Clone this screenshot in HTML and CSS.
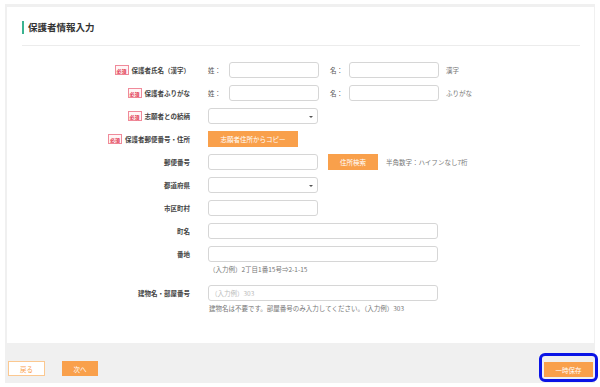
FILE: index.html
```html
<!DOCTYPE html>
<html lang="ja">
<head>
<meta charset="utf-8">
<title>保護者情報入力</title>
<link rel="stylesheet" href="styles.css">
</head>
<body>
<div class="frame">
  <div class="panel">
    <div class="header"><h1 class="title">保護者情報入力</h1></div>
    <div class="form">
      <div class="row">
        <div class="label"><span class="req">必須</span>保護者氏名（漢字）</div>
        <div class="field">
          <div class="line">
            <span class="pre">姓：</span><div class="input w90"></div>
            <span class="pre mid">名：</span><div class="input w90"></div>
            <span class="hint side">漢字</span>
          </div>
        </div>
      </div>
      <div class="row">
        <div class="label"><span class="req">必須</span>保護者ふりがな</div>
        <div class="field">
          <div class="line">
            <span class="pre">姓：</span><div class="input w90"></div>
            <span class="pre mid">名：</span><div class="input w90"></div>
            <span class="hint side">ふりがな</span>
          </div>
        </div>
      </div>
      <div class="row">
        <div class="label"><span class="req">必須</span>志願者との続柄</div>
        <div class="field">
          <div class="line"><div class="input select w110"></div></div>
        </div>
      </div>
      <div class="row">
        <div class="label"><span class="req">必須</span>保護者郵便番号・住所</div>
        <div class="field">
          <div class="line"><span class="btn copy">志願者住所からコピー</span></div>
        </div>
      </div>
      <div class="row">
        <div class="label">郵便番号</div>
        <div class="field">
          <div class="line">
            <div class="input w110"></div>
            <span class="btn search">住所検索</span>
            <span class="hint side2">半角数字：ハイフンなし7桁</span>
          </div>
        </div>
      </div>
      <div class="row">
        <div class="label">都道府県</div>
        <div class="field">
          <div class="line"><div class="input select w110"></div></div>
        </div>
      </div>
      <div class="row">
        <div class="label">市区町村</div>
        <div class="field">
          <div class="line"><div class="input w110"></div></div>
        </div>
      </div>
      <div class="row">
        <div class="label">町名</div>
        <div class="field">
          <div class="line"><div class="input w230"></div></div>
        </div>
      </div>
      <div class="row">
        <div class="label">番地</div>
        <div class="field">
          <div class="line"><div class="input w230"></div></div>
          <div class="hint below">（入力例）2丁目1番15号⇒2-1-15</div>
        </div>
      </div>
      <div class="row">
        <div class="label">建物名・部屋番号</div>
        <div class="field">
          <div class="line"><div class="input w230"><span class="ph">（入力例）303</span></div></div>
          <div class="hint below">建物名は不要です。部屋番号のみ入力してください。（入力例）303</div>
        </div>
      </div>
    </div>
  </div>
  <div class="footer">
    <span class="fbtn back">戻る</span>
    <span class="fbtn next">次へ</span>
    <span class="fbtn save">一時保存</span>
  </div>
</div>
</body>
</html>
```

FILE: styles.css
```css
* { box-sizing: border-box; }
html, body { margin: 0; padding: 0; background: #fff; }
body {
  font-family: "Noto Sans CJK JP", "Noto Sans", "Liberation Sans", sans-serif;
  color: #444;
  width: 600px;
  height: 387px;
  overflow: hidden;
}
.frame {
  margin: 4px 0 0 5px;
  width: 590px;
  background: #f0f0f0;
  padding: 3px 1px 0 2px;
}
.panel {
  background: #fff;
  height: 336px;
  padding: 0 14px 0 15px;
}
.header {
  padding-top: 14px;
  padding-bottom: 11px;
  border-bottom: 1px solid #ececec;
}
.title {
  margin: 0;
  font-size: 9.5px;
  line-height: 13px;
  font-weight: bold;
  color: #333;
  border-left: 2px solid #3bb391;
  padding-left: 4px;
}
.form {
  display: flex;
  flex-direction: column;
  gap: 7px;
  padding-top: 16px;
}
.row {
  display: grid;
  grid-template-columns: 168px 1fr;
  column-gap: 18px;
  align-items: start;
}
.label {
  height: 16px;
  display: flex;
  justify-content: flex-end;
  align-items: center;
  gap: 2px;
  font-size: 6.5px;
  font-weight: bold;
  color: #444;
  white-space: nowrap;
}
.req {
  display: inline-flex;
  align-items: center;
  justify-content: center;
  width: 14px;
  height: 10px;
  border: 1px solid #f08a9a;
  background: #fff5f6;
  color: #e0304a;
  font-size: 5px;
  font-weight: bold;
  margin-right: 1px;
}
.field { display: flex; flex-direction: column; }
.line {
  display: flex;
  align-items: center;
  height: 16px;
}
.pre {
  font-size: 6.5px;
  color: #555;
  width: 21px;
  white-space: nowrap;
}
.pre.mid { margin-left: 11px; width: 19px; }
.input {
  height: 16px;
  border: 1px solid #d6d6d6;
  border-radius: 3px;
  background: #fff;
  position: relative;
  display: flex;
  align-items: center;
}
.w90 { width: 90px; }
.w110 { width: 110px; }
.w230 { width: 230px; }
.select::after {
  content: "";
  position: absolute;
  right: 4px;
  top: 7px;
  border-left: 2px solid transparent;
  border-right: 2px solid transparent;
  border-top: 2px solid #555;
}
.ph {
  font-size: 6.5px;
  color: #bbb;
  padding-left: 2px;
}
.hint {
  font-size: 6.5px;
  color: #777;
  white-space: nowrap;
}
.hint.side { margin-left: 7px; }
.hint.side2 { margin-left: 8px; }
.hint.below {
  margin-top: 2px;
  margin-bottom: 4px;
  line-height: 10px;
  padding-left: 1px;
}
.btn {
  display: inline-flex;
  align-items: center;
  justify-content: center;
  height: 16px;
  background: #f9a04b;
  color: #fff;
  font-size: 6.5px;
  white-space: nowrap;
}
.btn.copy { width: 90px; }
.btn.search { width: 50px; margin-left: 10px; }
.footer {
  height: 40px;
  margin-left: -2px;
  margin-right: -1px;
  display: flex;
  align-items: flex-start;
  padding: 18px 2px 0 3px;
  position: relative;
}
.fbtn {
  display: inline-flex;
  align-items: center;
  justify-content: center;
  height: 15px;
  font-size: 6.5px;
  white-space: nowrap;
}
.back {
  width: 37px;
  background: #fff;
  border: 1px solid #fbc890;
  color: #f9a04b;
}
.next {
  width: 36px;
  margin-left: 17px;
  background: #f9a04b;
  color: #fff;
}
.save {
  width: 49px;
  margin-left: auto;
  margin-top: 1px;
  background: #f9a04b;
  color: #fff;
  position: relative;
}
.save::after {
  content: "";
  position: absolute;
  left: -5px;
  right: -5px;
  top: -9px;
  bottom: -5px;
  border: 3px solid #0a14e6;
  border-radius: 6px;
}
```
